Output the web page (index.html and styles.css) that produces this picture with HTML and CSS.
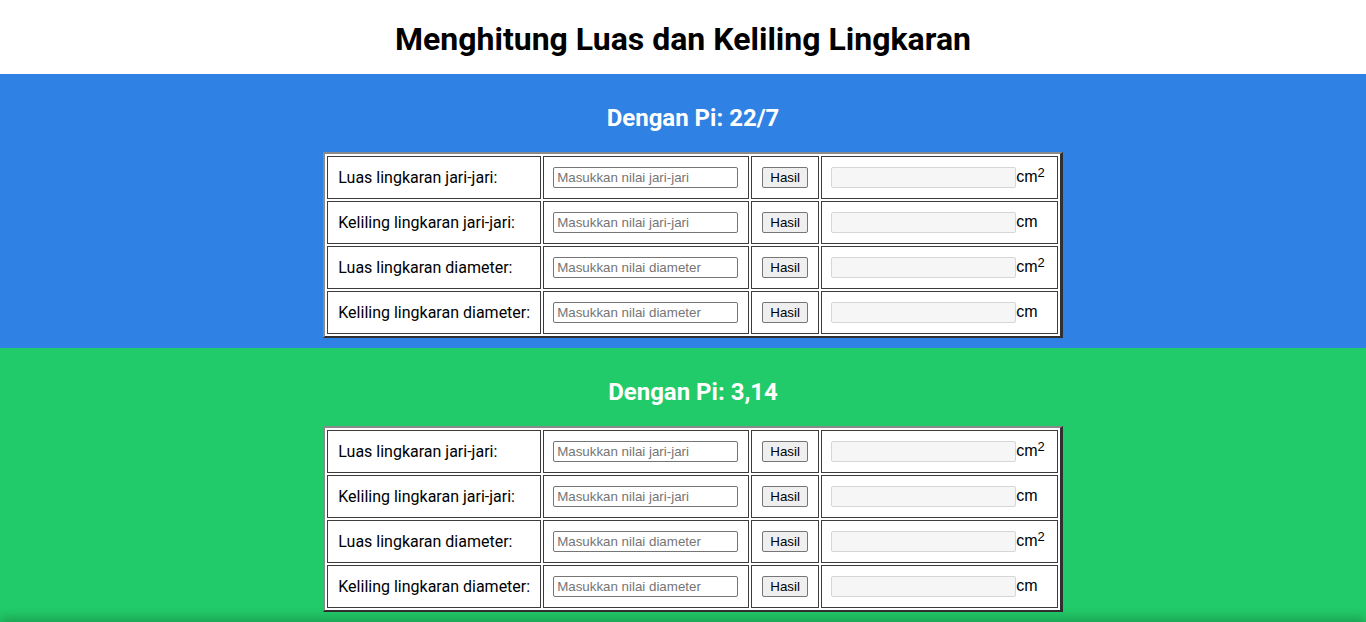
FILE: index.html
```html
<!DOCTYPE html>
<html lang="id">
<head>
<meta charset="utf-8">
<title>Menghitung Luas dan Keliling Lingkaran</title>
<link rel="stylesheet" href="styles.css">
</head>
<body>
<header class="page-header">
  <h1 class="title">Menghitung Luas dan Keliling Lingkaran</h1>
</header>

<section class="panel panel-blue">
  <h2 class="panel-title">Dengan Pi: 22/7</h2>
  <table class="calc">
    <tr>
      <td><div class="cell label">Luas lingkaran jari-jari:</div></td>
      <td><div class="cell"><input class="field" type="text" placeholder="Masukkan nilai jari-jari"></div></td>
      <td><div class="cell"><button class="btn" type="button">Hasil</button></div></td>
      <td><div class="cell"><input class="result" type="text" readonly><span class="unit">cm<sup>2</sup></span></div></td>
    </tr>
    <tr>
      <td><div class="cell label">Keliling lingkaran jari-jari:</div></td>
      <td><div class="cell"><input class="field" type="text" placeholder="Masukkan nilai jari-jari"></div></td>
      <td><div class="cell"><button class="btn" type="button">Hasil</button></div></td>
      <td><div class="cell"><input class="result" type="text" readonly><span class="unit">cm</span></div></td>
    </tr>
    <tr>
      <td><div class="cell label">Luas lingkaran diameter:</div></td>
      <td><div class="cell"><input class="field" type="text" placeholder="Masukkan nilai diameter"></div></td>
      <td><div class="cell"><button class="btn" type="button">Hasil</button></div></td>
      <td><div class="cell"><input class="result" type="text" readonly><span class="unit">cm<sup>2</sup></span></div></td>
    </tr>
    <tr>
      <td><div class="cell label">Keliling lingkaran diameter:</div></td>
      <td><div class="cell"><input class="field" type="text" placeholder="Masukkan nilai diameter"></div></td>
      <td><div class="cell"><button class="btn" type="button">Hasil</button></div></td>
      <td><div class="cell"><input class="result" type="text" readonly><span class="unit">cm</span></div></td>
    </tr>
  </table>
</section>

<section class="panel panel-green">
  <h2 class="panel-title">Dengan Pi: 3,14</h2>
  <table class="calc">
    <tr>
      <td><div class="cell label">Luas lingkaran jari-jari:</div></td>
      <td><div class="cell"><input class="field" type="text" placeholder="Masukkan nilai jari-jari"></div></td>
      <td><div class="cell"><button class="btn" type="button">Hasil</button></div></td>
      <td><div class="cell"><input class="result" type="text" readonly><span class="unit">cm<sup>2</sup></span></div></td>
    </tr>
    <tr>
      <td><div class="cell label">Keliling lingkaran jari-jari:</div></td>
      <td><div class="cell"><input class="field" type="text" placeholder="Masukkan nilai jari-jari"></div></td>
      <td><div class="cell"><button class="btn" type="button">Hasil</button></div></td>
      <td><div class="cell"><input class="result" type="text" readonly><span class="unit">cm</span></div></td>
    </tr>
    <tr>
      <td><div class="cell label">Luas lingkaran diameter:</div></td>
      <td><div class="cell"><input class="field" type="text" placeholder="Masukkan nilai diameter"></div></td>
      <td><div class="cell"><button class="btn" type="button">Hasil</button></div></td>
      <td><div class="cell"><input class="result" type="text" readonly><span class="unit">cm<sup>2</sup></span></div></td>
    </tr>
    <tr>
      <td><div class="cell label">Keliling lingkaran diameter:</div></td>
      <td><div class="cell"><input class="field" type="text" placeholder="Masukkan nilai diameter"></div></td>
      <td><div class="cell"><button class="btn" type="button">Hasil</button></div></td>
      <td><div class="cell"><input class="result" type="text" readonly><span class="unit">cm</span></div></td>
    </tr>
  </table>
</section>

<footer class="page-footer"></footer>
</body>
</html>
```

FILE: styles.css
```css
html, body {
  margin: 0;
  padding: 0;
}

body {
  font-family: Roboto, "Liberation Sans", Arial, sans-serif;
  color: #000;
  background: #fff;
}

.page-header {
  padding: 21px 0 16px;
}

.title {
  margin: 0;
  text-align: center;
  font-size: 32px;
  font-weight: 700;
  line-height: 37px;
}

.panel {
  padding: 10px 0 10px 20px;
}

.panel-blue {
  background: #2f81e3;
}

.panel-green {
  background: #22cb69;
  position: relative;
}

.panel-title {
  margin: 20px 0;
  text-align: center;
  color: #fff;
  font-size: 24px;
  font-weight: 700;
  line-height: 28px;
}

.calc {
  margin: 0 auto;
  background: #fff;
  border-collapse: separate;
  border-spacing: 2px;
  border-style: solid;
  border-width: 2px 3px 2px 2px;
  border-color: #8a8a8a #303030 #303030 #8a8a8a;
}

.calc td {
  border: 1px solid #3c3c3c;
  padding: 10px 10px 10px 9px;
  vertical-align: middle;
  white-space: nowrap;
}

.cell {
  display: flex;
  align-items: center;
  height: 21px;
  font-size: 16px;
}

.cell.label {
  font-family: Roboto, "Liberation Sans", sans-serif;
  padding-left: 1px;
}

.field,
.result {
  box-sizing: border-box;
  width: 185px;
  height: 21px;
  margin: 0;
  padding: 1px 3px;
  font-family: "Liberation Sans", Arial, sans-serif;
  font-size: 13.33px;
  border-radius: 2px;
  outline: none;
}

.field {
  background: #fff;
  border: 1px solid #767676;
  color: #000;
}

.field::placeholder {
  color: #757575;
}

.result {
  background: #f6f6f6;
  border: 1px solid #d6d6d6;
}

.btn {
  box-sizing: border-box;
  width: 46px;
  height: 21px;
  margin: 0 0 0 1px;
  padding: 1px 0;
  font-family: "Liberation Sans", Arial, sans-serif;
  font-size: 13.33px;
  text-align: center;
  color: #000;
  background: #efefef;
  border: 1px solid #767676;
  border-radius: 2px;
}

.unit {
  font-family: "Liberation Sans", Arial, sans-serif;
  font-size: 16px;
  line-height: 18px;
  margin-top: -2px;
  padding-right: 2px;
}

.unit sup {
  font-size: 13px;
  line-height: 0;
  vertical-align: 5px;
}

.page-footer {
  height: 40px;
  background: #22cb69;
  box-shadow: 0 -5px 10px rgba(0, 0, 0, 0.2);
  position: relative;
}
```
